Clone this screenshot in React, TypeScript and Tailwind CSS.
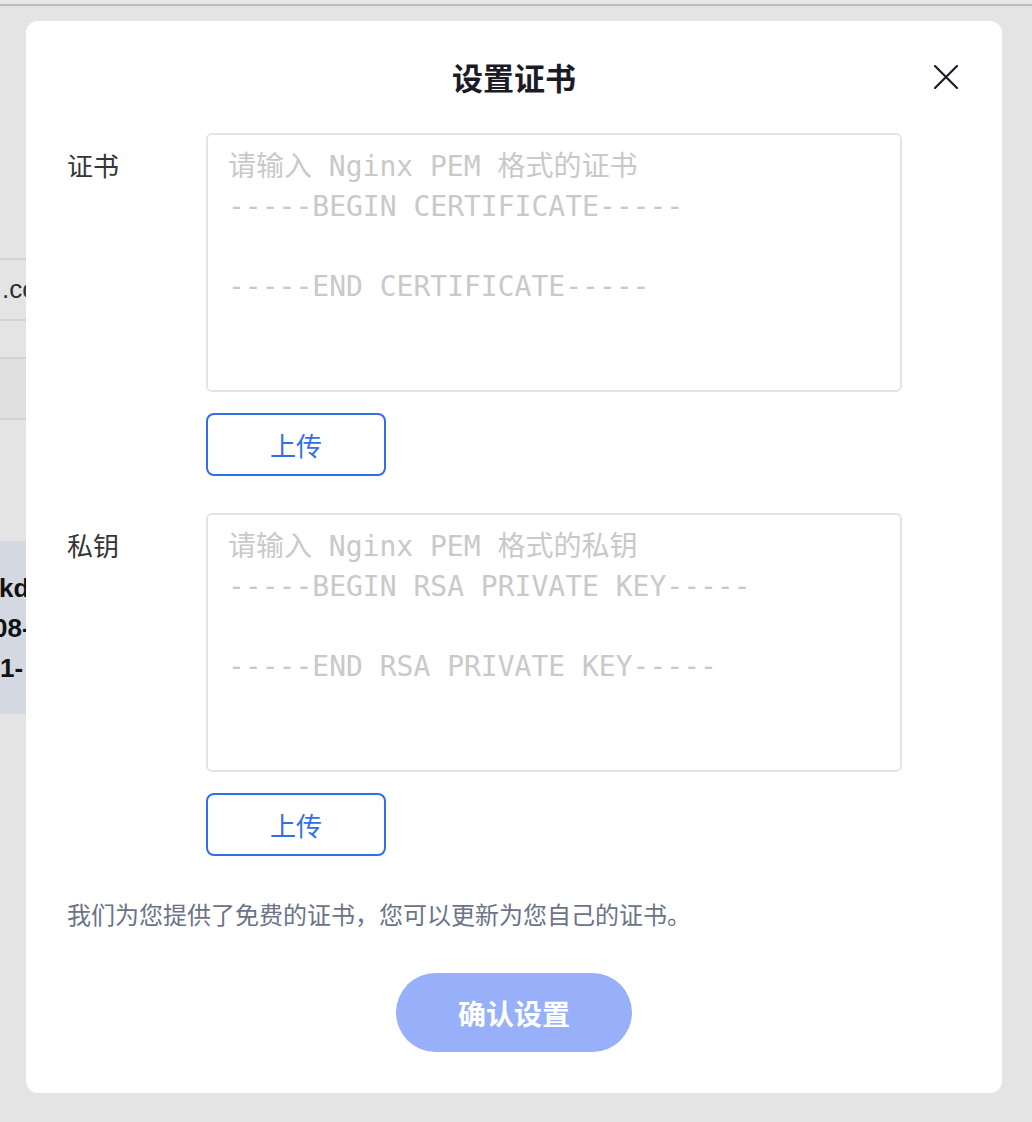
import React from "react";

const cjk = { fontFamily: '"Noto Sans CJK SC", "Liberation Sans", sans-serif' };
const mono = { fontFamily: '"DejaVu Sans Mono", "Noto Sans CJK SC", monospace' };

function Field({ label, placeholder }: { label: string; placeholder: string }) {
  return (
    <div className="flex">
      <div className="w-[139px] shrink-0 pt-[12px] text-[26px] leading-[40px] text-[#353535]" style={cjk}>
        {label}
      </div>
      <div className="flex w-[696px] flex-col items-start">
        <textarea
          readOnly
          placeholder={placeholder}
          className="h-[259px] w-full resize-none rounded-[6px] border-2 border-[#e4e4e4] bg-white px-[20px] py-[12px] text-[28px] leading-[40px] outline-none placeholder:text-[#c9c9c9]"
          style={mono}
        />
        <button
          className="mt-[21px] flex h-[63px] w-[180px] items-center justify-center rounded-[8px] border-2 border-[#2f6fea] bg-white text-[26px] text-[#2f6fea]"
          style={cjk}
        >
          上传
        </button>
      </div>
    </div>
  );
}

export default function App() {
  return (
    <div className="relative h-[1122px] w-[1032px] overflow-hidden bg-[#e4e4e4]" style={cjk}>
      {/* underlying page */}
      <div className="flex flex-col">
        <div className="h-[4px] bg-[#e7e7e7]" />
        <div className="h-[2px] bg-[#bcbcbc]" />
        <div className="h-[252px]" />
        <div className="w-[980px]">
          <div className="flex h-[63px] items-center border-y-2 border-[#d2d2d2] text-[26px] text-[#2e2e2e]" style={{ fontFamily: '"Liberation Sans", sans-serif' }}>
            <span className="pl-[2px]">.com</span>
          </div>
          <div className="h-[36px]" />
          <div className="h-[63px] border-y-2 border-[#d2d2d2] bg-[#e0e0e0]" />
          <div className="h-[121px]" />
          <div
            className="flex h-[173px] flex-col justify-center bg-[#d3d8e3] text-[26px] font-bold leading-[40px] text-[#111]"
            style={{ fontFamily: '"Liberation Sans", sans-serif' }}
          >
            <span className="-ml-[1px]">kdc</span>
            <span className="-ml-[7px]">08-</span>
            <span>1-</span>
          </div>
        </div>
      </div>

      {/* modal */}
      <div className="absolute left-[26px] top-[21px] flex h-[1072px] w-[976px] flex-col rounded-[12px] bg-white pl-[41px] pr-[100px] pt-[36px]">
        <div className="pl-[59px] text-center text-[31px] font-bold leading-[40px] text-[#1b1b28]">设置证书</div>
        <button className="absolute right-[44px] top-[44px] h-[24px] w-[24px]" aria-label="close">
          <svg viewBox="0 0 24 24" width="24" height="24" fill="none" stroke="#1b1b28" strokeWidth="2.2" strokeLinecap="round">
            <path d="M1 1 L23 23 M23 1 L1 23" />
          </svg>
        </button>
        <div className="mt-[36px] flex flex-col gap-[37px]">
          <Field label="证书" placeholder={"请输入 Nginx PEM 格式的证书\n-----BEGIN CERTIFICATE-----\n\n-----END CERTIFICATE-----"} />
          <Field label="私钥" placeholder={"请输入 Nginx PEM 格式的私钥\n-----BEGIN RSA PRIVATE KEY-----\n\n-----END RSA PRIVATE KEY-----"} />
        </div>
        <p className="mt-[41px] text-[24px] leading-[34px] text-[#6b7386]">我们为您提供了免费的证书，您可以更新为您自己的证书。</p>
        <div className="mt-[42px] flex justify-center pl-[59px]">
          <button className="flex h-[79px] w-[236px] items-center justify-center rounded-full bg-[#98b0fa] text-[28px] font-semibold text-white">
            确认设置
          </button>
        </div>
      </div>
    </div>
  );
}
